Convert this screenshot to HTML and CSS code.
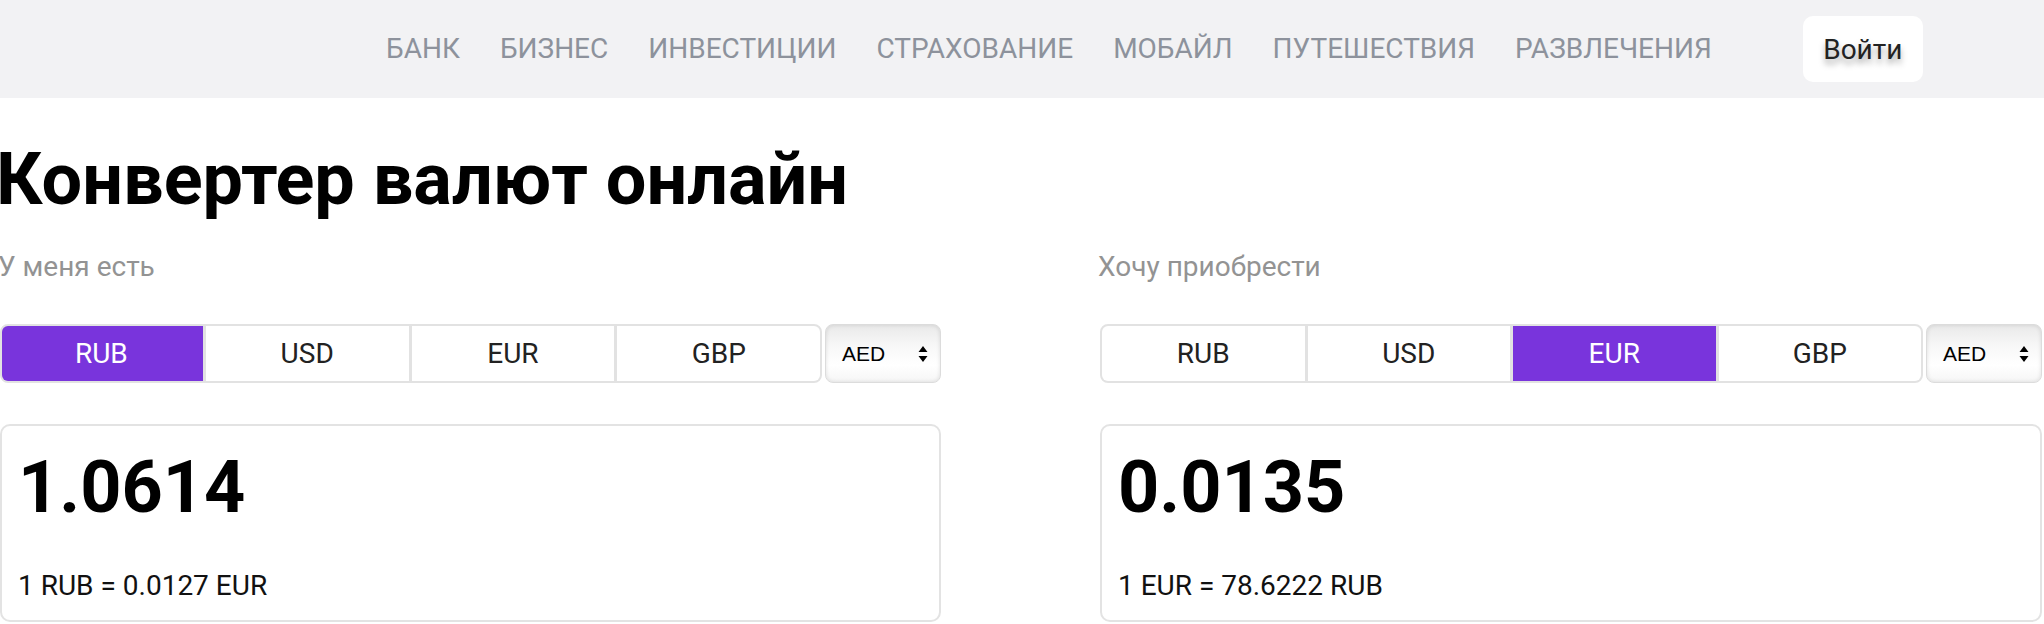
FILE: index.html
```html
<!DOCTYPE html>
<html lang="ru">
<head>
<meta charset="utf-8">
<title>Конвертер валют онлайн</title>
<link rel="stylesheet" href="styles.css">
</head>
<body>
<header class="topbar">
  <nav class="menu">
    <a href="#">БАНК</a>
    <a href="#">БИЗНЕС</a>
    <a href="#">ИНВЕСТИЦИИ</a>
    <a href="#">СТРАХОВАНИЕ</a>
    <a href="#">МОБАЙЛ</a>
    <a href="#">ПУТЕШЕСТВИЯ</a>
    <a href="#">РАЗВЛЕЧЕНИЯ</a>
  </nav>
  <button class="login">Войти</button>
</header>
<main class="converter">
  <h1 class="title">Конвертер валют онлайн</h1>
  <div class="cols">
    <section class="col">
      <div class="label">У меня есть</div>
      <div class="picker">
        <div class="group">
          <button class="cur active">RUB</button>
          <button class="cur">USD</button>
          <button class="cur">EUR</button>
          <button class="cur">GBP</button>
        </div>
        <div class="select">
          <span>AED</span>
          <svg class="arrows" width="10" height="20" viewBox="0 0 10 20"><path d="M5 2 L9.5 8 L0.5 8 Z M5 18 L9.5 12 L0.5 12 Z" fill="#000"/></svg>
        </div>
      </div>
      <div class="box">
        <div class="value">1.0614</div>
        <div class="rate">1 RUB = 0.0127 EUR</div>
      </div>
    </section>
    <section class="col">
      <div class="label">Хочу приобрести</div>
      <div class="picker">
        <div class="group">
          <button class="cur">RUB</button>
          <button class="cur">USD</button>
          <button class="cur active">EUR</button>
          <button class="cur">GBP</button>
        </div>
        <div class="select">
          <span>AED</span>
          <svg class="arrows" width="10" height="20" viewBox="0 0 10 20"><path d="M5 2 L9.5 8 L0.5 8 Z M5 18 L9.5 12 L0.5 12 Z" fill="#000"/></svg>
        </div>
      </div>
      <div class="box">
        <div class="value">0.0135</div>
        <div class="rate">1 EUR = 78.6222 RUB</div>
      </div>
    </section>
  </div>
</main>
</body>
</html>
```
FILE: styles.css
```css
* { box-sizing: border-box; }
html, body { margin: 0; padding: 0; background: #fff; }
body { font-family: Roboto, "Noto Sans", Arial, sans-serif; color: #000; overflow: hidden; }

.topbar {
  height: 98px;
  background: #f2f2f4;
  display: flex;
  align-items: center;
  padding-left: 386px;
}
.menu { display: flex; gap: 40px; }
.menu a {
  font-size: 28px;
  line-height: 32px;
  color: #8d929c;
  text-decoration: none;
}
.login {
  margin-left: 91px;
  width: 120px;
  height: 66px;
  border: 0;
  border-radius: 10px;
  background: #fff;
  font-family: Roboto, Arial, sans-serif;
  font-size: 28px;
  color: #222;
  text-shadow: 0 5px 6px rgba(0,0,0,0.35);
  padding: 0;
}

.converter { padding: 0; }
.title {
  margin: 38px 0 0 -4px;
  font-size: 72px;
  line-height: 88px;
  font-weight: 700;
}
.cols {
  display: grid;
  grid-template-columns: 941px 942px;
  column-gap: 159px;
  margin-top: 27px;
}
.label {
  font-size: 28px;
  line-height: 32px;
  color: #939393;
  margin-left: -2px;
}
.picker {
  display: flex;
  margin-top: 41px;
  height: 59px;
  gap: 3px;
}
.group {
  display: flex;
  width: 823px;
  background: #e2e2e2;
  border: 2px solid #e2e2e2;
  border-radius: 8px;
  gap: 3px;
  overflow: hidden;
}
.cur {
  flex: 1;
  border: 0;
  background: #fff;
  font-family: Roboto, Arial, sans-serif;
  font-size: 28px;
  color: #222;
  padding: 0;
}
.cur.active {
  background: #7934dc;
  color: #fff;
  margin: -2px 0;
}
.cur.active:first-child { margin-left: -2px; }
.select {
  width: 116px;
  border: 1px solid #dcdcdc;
  border-radius: 8px;
  background: linear-gradient(#e9e9e9, #f7f7f7 35%, #ffffff 70%, #f6f6f6);
  box-shadow: inset 0 0 4px rgba(0,0,0,0.12);
  display: flex;
  align-items: center;
  justify-content: space-between;
  padding: 0 12px 0 16px;
  font-family: "Liberation Sans", Arial, sans-serif;
  font-size: 21px;
}
.arrows { display: block; }
.box {
  margin-top: 41px;
  height: 198px;
  border: 2px solid #e3e3e3;
  border-radius: 10px;
  padding: 18px 16px 0 16px;
}
.value {
  font-size: 72px;
  line-height: 88px;
  font-weight: 700;
}
.rate {
  margin-top: 38px;
  font-size: 28px;
  line-height: 32px;
  color: #111;
}
```
